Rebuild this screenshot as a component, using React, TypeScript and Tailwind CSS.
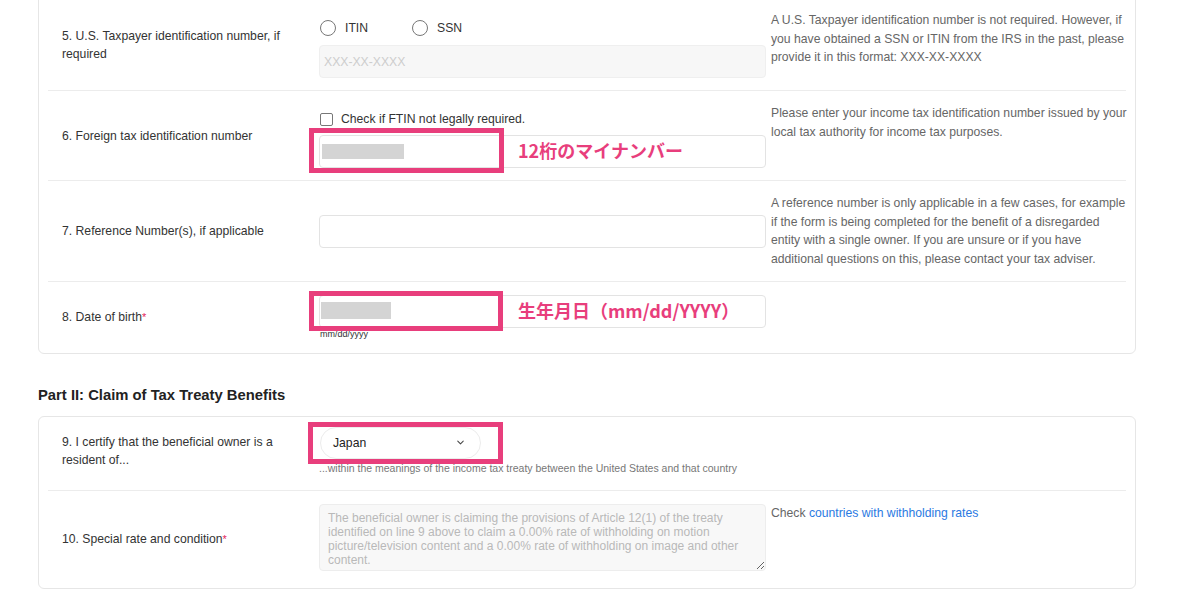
import React from 'react';
import { ChevronDown } from 'lucide-react';

interface RowProps {
  label: React.ReactNode;
  help?: React.ReactNode;
  last?: boolean;
  className?: string;
  children: React.ReactNode;
}

const Row: React.FC<RowProps> = ({ label, help, last = false, className = '', children }) => (
  <div className={`flex items-center ${last ? '' : 'border-b border-[#ececec]'} ${className}`}>
    <div className="w-[271px] shrink-0 pl-[14px] pr-[12px] text-[12.2px] leading-[18px] text-[#333]">{label}</div>
    <div className="w-[447px] shrink-0">{children}</div>
    <div className="self-start flex-1 -mr-[5px] pl-[5px] text-[12.2px] leading-[18.7px] text-[#666]">{help}</div>
  </div>
);

const Radio: React.FC<{ label: string; className?: string }> = ({ label, className = '' }) => (
  <div className={`flex items-center gap-[9px] ${className}`}>
    <span className="w-4 h-4 rounded-full border-[1.5px] border-[#777] bg-white" />
    <span className="text-[12.2px] text-[#333]">{label}</span>
  </div>
);

// pink annotation frame drawn over the screenshot
const Highlight: React.FC<{ className: string }> = ({ className }) => (
  <div className={`absolute border-[5px] border-[#e83e7c] pointer-events-none ${className}`} />
);

const Note: React.FC<{ text: string }> = ({ text }) => (
  <div className="absolute left-[198px] top-0 h-full flex items-center pb-[2px] text-[18px] font-bold text-[#e83e7c] font-['Noto_Sans_CJK_JP',sans-serif]">
    {text}
  </div>
);

const Required = () => <span className="text-[#e3245a] text-[11px] align-top">*</span>;

export default function App() {
  return (
    <div className="min-h-[608px] bg-white font-['Liberation_Sans',Arial,sans-serif] overflow-hidden">
      <div className="w-[1098px] ml-[38px]">
        {/* Part I (continued) */}
        <div className="-mt-[3px] border border-[#e6e6e6] rounded-b-[6px] px-[9px]">
          <Row
            className="pt-[13px] pb-[12px]"
            label="5. U.S. Taxpayer identification number, if required"
            help="A U.S. Taxpayer identification number is not required. However, if you have obtained a SSN or ITIN from the IRS in the past, please provide it in this format: XXX-XX-XXXX"
          >
            <div className="h-[34px] flex items-center pl-[1px]">
              <Radio label="ITIN" className="w-[92px]" />
              <Radio label="SSN" />
            </div>
            <input
              readOnly
              placeholder="XXX-XX-XXXX"
              className="block w-full h-[33px] rounded-[4px] bg-[#f7f7f7] border border-[#efefef] px-[4px] text-[12.2px] outline-none placeholder:text-[#cdcdcd]"
            />
          </Row>

          <Row
            className="pt-[13px] pb-[12px]"
            label="6. Foreign tax identification number"
            help="Please enter your income tax identification number issued by your local tax authority for income tax purposes."
          >
            <div className="h-[31px] flex items-center gap-[8px] pl-[1px]">
              <span className="w-[13px] h-[13px] rounded-[2px] border border-[#777] bg-white" />
              <span className="text-[12.2px] text-[#333]">Check if FTIN not legally required.</span>
            </div>
            <div className="relative h-[33px] rounded-[4px] border border-[#e3e3e3] bg-white">
              <div className="absolute left-[2px] top-[8px] w-[82px] h-[15px] bg-[#d4d4d4]" />
              <Highlight className="-left-[11px] -top-[8px] w-[195px] h-[45px]" />
              <Note text="12桁のマイナンバー" />
            </div>
          </Row>

          <Row
            className="pt-[13px] pb-[12px]"
            label="7. Reference Number(s), if applicable"
            help="A reference number is only applicable in a few cases, for example if the form is being completed for the benefit of a disregarded entity with a single owner. If you are unsure or if you have additional questions on this, please contact your tax adviser."
          >
            <div className="h-[33px] rounded-[4px] border border-[#e3e3e3] bg-white" />
          </Row>

          <Row
            last
            className="pt-[13px] pb-[13px]"
            label={<>8. Date of birth<Required /></>}
          >
            <div className="relative h-[33px] rounded-[4px] border border-[#e3e3e3] bg-white">
              <div className="absolute left-[1px] top-[6px] w-[70px] h-[17px] bg-[#d4d4d4]" />
              <Highlight className="-left-[11px] -top-[5px] w-[194px] h-[40px]" />
              <Note text="生年月日（mm/dd/YYYY）" />
            </div>
            <div className="h-[12px] pl-[1px] text-[9px] leading-[12px] text-[#333]">mm/dd/yyyy</div>
          </Row>
        </div>

        <h2 className="mt-[31px] mb-[11px] text-[14.8px] leading-[20px] font-bold text-[#222]">
          Part II: Claim of Tax Treaty Benefits
        </h2>

        {/* Part II */}
        <div className="border border-[#e6e6e6] rounded-[6px] px-[9px]">
          <Row
            className="pt-[10px] pb-[14px]"
            label="9. I certify that the beneficial owner is a resident of..."
          >
            <div className="relative ml-[1px] w-[161px] h-[32px] rounded-full border border-[#ececec] bg-white flex items-center justify-between pl-[12px] pr-[14px]">
              <span className="text-[12.2px] text-[#222]">Japan</span>
              <ChevronDown size={11} strokeWidth={2.2} className="text-[#444]" />
              <Highlight className="-left-[13px] -top-[6px] w-[195px] h-[42px]" />
            </div>
            <div className="mt-[1px] text-[10.5px] leading-[16px] text-[#777]">
              ...within the meanings of the income tax treaty between the United States and that country
            </div>
          </Row>

          <Row
            last
            className="pt-[13px] pb-[13px]"
            label={<>10. Special rate and condition<Required /></>}
            help={
              <>
                Check <span className="text-[#2a7ae2]">countries with withholding rates</span>
              </>
            }
          >
            <textarea
              readOnly
              placeholder="The beneficial owner is claiming the provisions of Article 12(1) of the treaty identified on line 9 above to claim a 0.00% rate of withholding on motion picture/television content and a 0.00% rate of withholding on image and other content."
              className="block w-full h-[67px] mb-[4px] rounded-[4px] bg-[#f8f8f8] border border-[#ededed] px-[8px] pt-[6px] text-[12px] leading-[14px] outline-none placeholder:text-[#b9b9b9]"
            />
          </Row>
        </div>
      </div>
    </div>
  );
}
